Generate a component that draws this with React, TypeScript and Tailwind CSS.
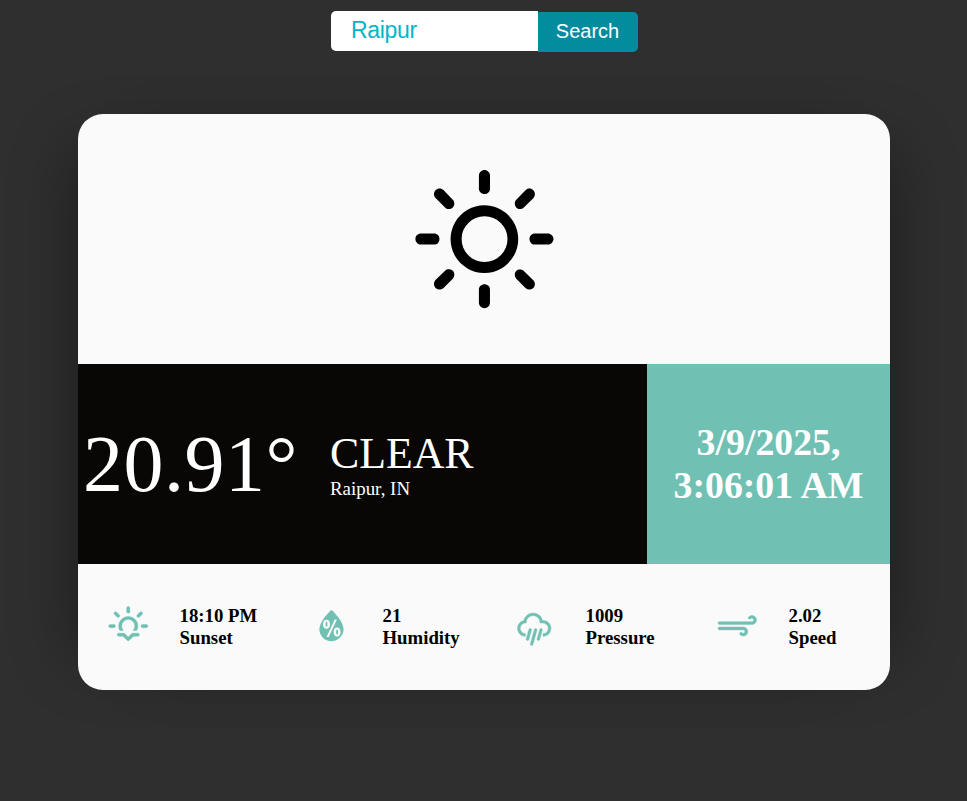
import { WiDaySunny, WiHumidity, WiRain, WiStrongWind, WiSunset } from "react-icons/wi";

const details = [
  { Icon: WiSunset, value: "18:10 PM", label: "Sunset" },
  { Icon: WiHumidity, value: "21", label: "Humidity" },
  { Icon: WiRain, value: "1009", label: "Pressure" },
  { Icon: WiStrongWind, value: "2.02", label: "Speed" },
];

export default function App() {
  return (
    <div className="min-h-screen overflow-hidden bg-[#2f2f2f] font-['Liberation_Serif',serif]">
      <div className="flex items-start pt-[11px] pl-[331px] font-['Liberation_Sans',sans-serif]">
        <input
          type="search"
          defaultValue="Raipur"
          className="h-10 w-[207px] appearance-none rounded-l-[5px] bg-white pr-0 pb-0.5 pl-5 text-[23px] tracking-[-0.3px] text-[#00b4cc] outline-none"
        />
        <button className="mt-px h-10 w-[100px] rounded-r-[5px] bg-[#038c9e] pr-px pb-0.5 text-center text-[20px] text-white">
          Search
        </button>
      </div>
      <article className="mt-[62px] ml-[78px] h-[576px] w-[812px] overflow-hidden rounded-[25px] bg-[#fafafa] shadow-[-35px_0_60px_-35px_rgba(0,0,0,0.4),35px_0_60px_-35px_rgba(0,0,0,0.4)]">
        <div className="flex h-[250px] items-center justify-center pt-1">
          <WiDaySunny className="size-[195px] text-black" />
        </div>
        <div className="flex h-[200px] text-white">
          <div className="flex w-[569px] items-center bg-[#080705] pl-[5px]">
            <div className="w-[247px] text-[80px] leading-[92px] tracking-[0.5px]">20.91°</div>
            <div className="pb-px">
              <div className="text-[43.8px] leading-[50px]">CLEAR</div>
              <div className="text-[18.9px] leading-[22px]">Raipur, IN</div>
            </div>
          </div>
          <div className="flex flex-1 items-center justify-center bg-[#70c1b3] text-center text-[37.8px] leading-[43px] font-bold">
            <div>
              3/9/2025,
              <br />
              3:06:01 AM
            </div>
          </div>
        </div>
        <div className="grid h-[126px] grid-cols-4 items-center">
          {details.map(({ Icon, value, label }) => (
            <div key={label} className="flex items-center">
              <div className="flex w-[101.5px] justify-center pr-[1.5px] pb-[3px]">
                <Icon
                  className={
                    label === "Humidity"
                      ? "size-[49px] text-[#70c1b3]"
                      : "size-[48.5px] stroke-[0.25] text-[#70c1b3]"
                  }
                />
              </div>
              <p className="text-[18.8px] leading-[22px] font-bold text-black">
                {value}
                <br />
                {label}
              </p>
            </div>
          ))}
        </div>
      </article>
    </div>
  );
}
